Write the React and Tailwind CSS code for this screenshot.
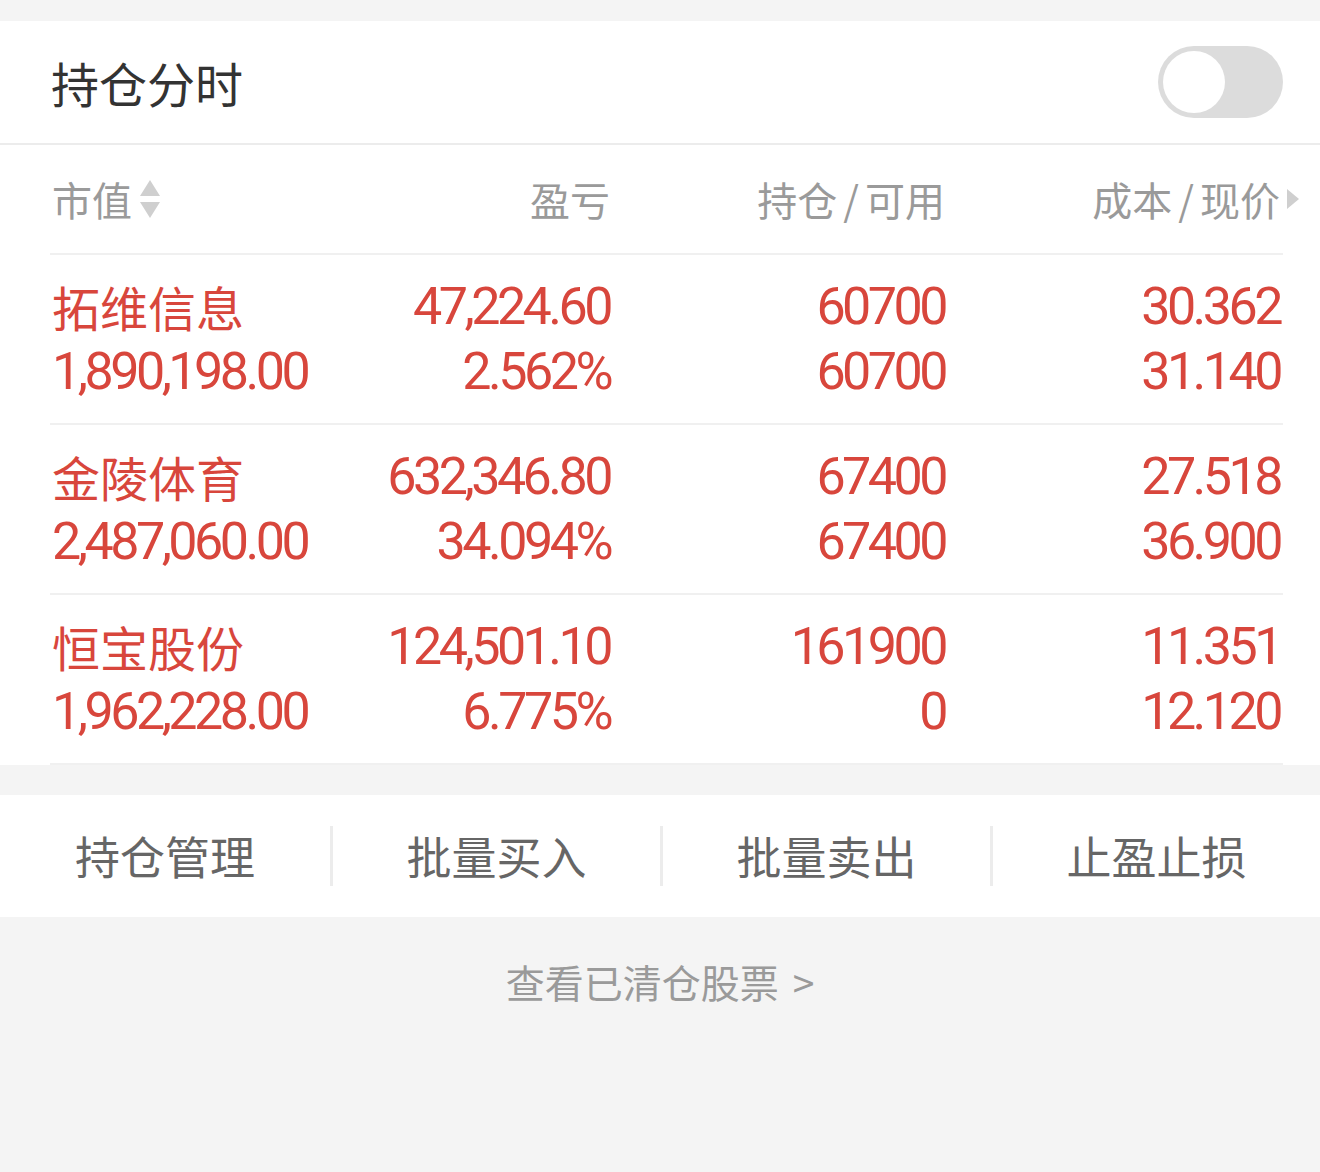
import React from 'react';

const rows = [
  { name: '拓维信息', value: '1,890,198.00', pl: '47,224.60', plPct: '2.562%', hold: '60700', avail: '60700', cost: '30.362', price: '31.140' },
  { name: '金陵体育', value: '2,487,060.00', pl: '632,346.80', plPct: '34.094%', hold: '67400', avail: '67400', cost: '27.518', price: '36.900' },
  { name: '恒宝股份', value: '1,962,228.00', pl: '124,501.10', plPct: '6.775%', hold: '161900', avail: '0', cost: '11.351', price: '12.120' },
];

const actions = ['持仓管理', '批量买入', '批量卖出', '止盈止损'];

const cjk = "font-['Noto_Sans_CJK_SC','Noto_Sans',sans-serif]";
const num = "font-['Roboto','Noto_Sans',sans-serif] tracking-[-3.5px] text-[52px]";

function Toggle() {
  return (
    <div className="w-[125px] h-[72px] rounded-full bg-[#dcdcdc] p-[5px] flex items-center">
      <div className="w-[62px] h-[62px] rounded-full bg-white" />
    </div>
  );
}

function App() {
  return (
    <div className={`min-h-[1172px] bg-[#f4f4f4] pt-[21px] ${cjk}`}>
      <div className="bg-white">
        <div className="h-[124px] flex items-center justify-between pl-[51px] pr-[37px] border-b-2 border-[#ececec]">
          <h1 className="text-[48px] text-[#333] leading-none">持仓分时</h1>
          <Toggle />
        </div>

        <div className="ml-[50px] mr-[37px] border-b-2 border-[#f0f0f0] h-[110px] grid grid-cols-[270px_288px_335px_1fr] items-center pl-[2px] pr-[3px] text-[40px] text-[#9a9a9a] leading-none">
          <div className="flex items-center">
            <span>市值</span>
            <svg width="24" height="42" viewBox="0 0 24 42" className="ml-[6px]">
              <polygon points="12,2 22,18 2,18" fill="#cfcfcf" />
              <polygon points="2,24 22,24 12,40" fill="#cfcfcf" />
            </svg>
          </div>
          <div className="text-right">盈亏</div>
          <div className="text-right">持仓<span className="mx-[6px]">/</span>可用</div>
          <div className="flex items-center justify-end relative">
            <span>成本<span className="mx-[6px]">/</span>现价</span>
            <svg width="14" height="22" viewBox="0 0 14 22" className="absolute right-[-20px]">
              <polygon points="1,1 13,11 1,21" fill="#cfcfcf" />
            </svg>
          </div>
        </div>

        {rows.map((r) => (
          <div
            key={r.name}
            className="ml-[50px] mr-[37px] border-b-2 border-[#f0f0f0] py-[19px] grid grid-cols-[270px_288px_335px_1fr] pl-[2px] pr-[3px] text-[#d8463c] leading-[65px]"
          >
            <div className="flex flex-col">
              <span className="text-[48px]">{r.name}</span>
              <span className={num}>{r.value}</span>
            </div>
            <div className={`flex flex-col text-right ${num}`}>
              <span>{r.pl}</span>
              <span>{r.plPct}</span>
            </div>
            <div className={`flex flex-col text-right ${num}`}>
              <span>{r.hold}</span>
              <span>{r.avail}</span>
            </div>
            <div className={`flex flex-col text-right ${num}`}>
              <span>{r.cost}</span>
              <span>{r.price}</span>
            </div>
          </div>
        ))}
      </div>

      <div className="mt-[30px] bg-white h-[122px] grid grid-cols-4 items-center">
        {actions.map((a, i) => (
          <div
            key={a}
            className={`h-[60px] flex items-center justify-center text-[45px] text-[#666] ${i > 0 ? 'border-l-[3px] border-[#ececec]' : ''}`}
          >
            {a}
          </div>
        ))}
      </div>

      <div className="h-[128px] flex items-center justify-center text-[39px] text-[#9a9a9a]">
        <span>查看已清仓股票</span>
        <span className="ml-[14px]">&gt;</span>
      </div>
    </div>
  );
}

export default App;
